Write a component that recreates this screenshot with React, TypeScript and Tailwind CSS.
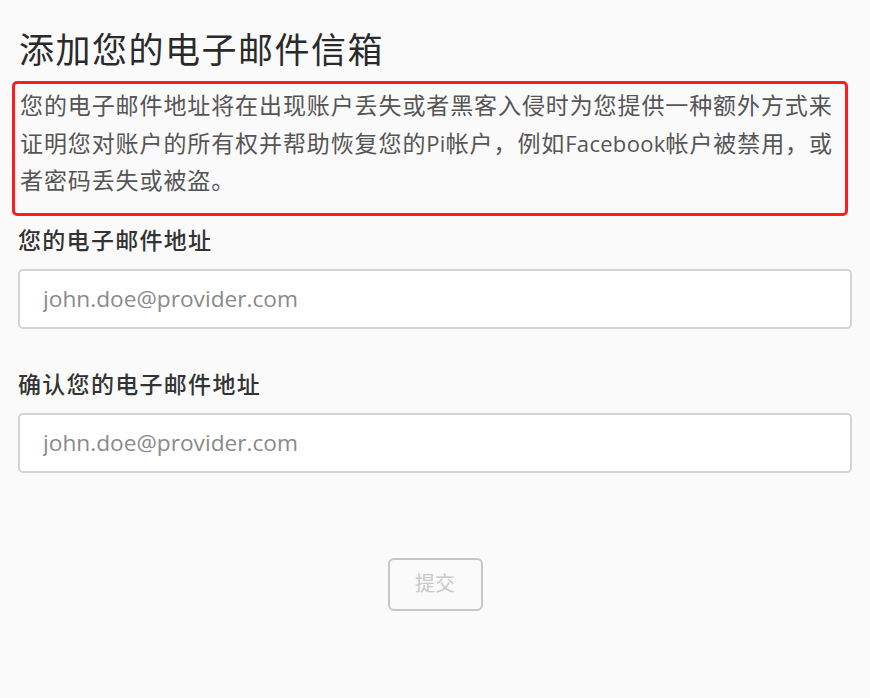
import React from 'react'

const cjk = { fontFamily: '"Open Sans", "Noto Sans CJK SC", sans-serif' }

const EmailField: React.FC<{ label: string }> = ({ label }) => (
  <div>
    <label className="block text-[23px] leading-[32px] font-medium text-[#333] tracking-[1.3px]">{label}</label>
    <input
      type="email"
      placeholder="john.doe@provider.com"
      className="mt-[13px] block w-full h-[60px] rounded-[5px] border-2 border-[#d4d4d4] bg-white px-[23px] text-[22.7px] text-[#333] placeholder:text-[#8a8a8a] outline-none"
    />
  </div>
)

const Latin: React.FC<{ children: React.ReactNode }> = ({ children }) => (
  <span className="text-[22px] tracking-[0.3px]">{children}</span>
)

export default function App() {
  return (
    <div className="min-h-screen bg-[#fafafa] px-[18px] pt-[25px]" style={cjk}>
      <h1 className="text-[35px] leading-[50px] font-normal text-[#2a2a2a] pl-[1px] tracking-[1.5px]">添加您的电子邮件信箱</h1>

      {/* description */}
      <div className="mt-[6px] -ml-[6px] mr-[4px] rounded-[5px] border-[3px] border-[#fa1e1e] pl-[5px] pr-[8px] pt-[3px] pb-[13px]">
        <p className="text-[23px] leading-[37.5px] text-[#555] tracking-[0.9px] whitespace-nowrap">
          您的电子邮件地址将在出现账户丢失或者黑客入侵时为您提供一种额外方式来
          <br />
          证明您对账户的所有权并帮助恢复您的<Latin>Pi</Latin>帐户，例如<Latin>Facebook</Latin>帐户被禁用，或
          <br />
          者密码丢失或被盗。
        </p>
      </div>

      <div className="mt-[8px] flex flex-col gap-[39px]">
        <EmailField label="您的电子邮件地址" />
        <EmailField label="确认您的电子邮件地址" />
      </div>

      <div className="mt-[85px] flex justify-center">
        <button
          disabled
          className="w-[95px] h-[53px] rounded-[6px] border-2 border-[#c6c6c6] bg-transparent text-[20px] text-[#c8c8c8]"
        >
          提交
        </button>
      </div>
    </div>
  )
}
